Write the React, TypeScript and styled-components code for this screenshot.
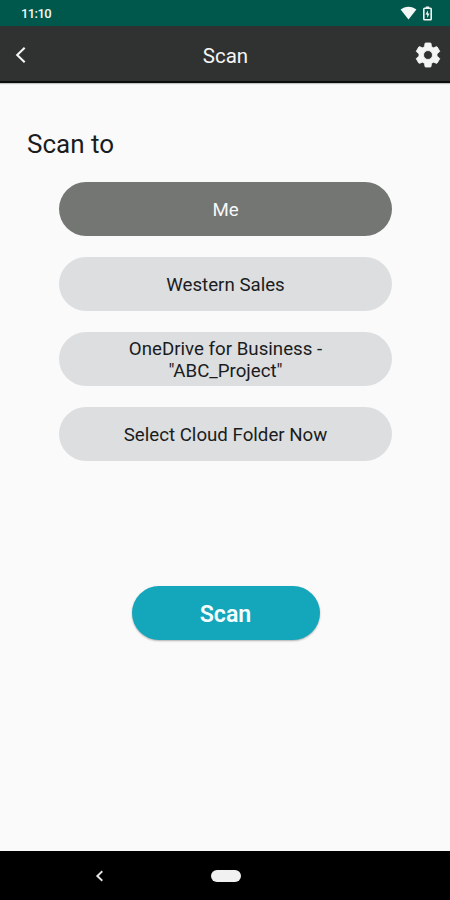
import React from 'react';
import styled, { createGlobalStyle } from 'styled-components';

const GlobalStyle = createGlobalStyle`
  *, *::before, *::after { box-sizing: border-box; }
  body { margin: 0; background: #fafafa; }
  button { font: inherit; border: 0; margin: 0; padding: 0; background: none; color: inherit; }
  svg { display: block; }
`;

const Screen = styled.div`
  width: 450px;
  height: 900px;
  display: flex;
  flex-direction: column;
  overflow: hidden;
  background: #fafafa;
  color: #1b1c1d;
  font-family: Roboto, 'Liberation Sans', sans-serif;
`;

const StatusBar = styled.div`
  height: 26px;
  flex: none;
  display: flex;
  align-items: center;
  justify-content: space-between;
  padding: 1px 18px 0 21px;
  background: #00574b;
  color: #f2f7f6;
`;

const Clock = styled.span`
  font-size: 13px;
  font-weight: 500;
  line-height: 16px;
  letter-spacing: -0.6px;
`;

const StatusIcons = styled.div`
  display: flex;
  align-items: center;
  gap: 6px;
  padding-bottom: 1px;
`;

const AppBar = styled.header`
  height: 57px;
  flex: none;
  display: grid;
  grid-template-columns: 56px 1fr 56px;
  align-items: center;
  background: #303231;
  color: #f4f5f5;
  border-bottom: 2px solid #0c0d0d;
  box-shadow: 0 1px 1px rgba(0, 0, 0, 0.22);
`;

const Title = styled.h1`
  margin: 0;
  padding: 4px 0 0 1px;
  text-align: center;
  font-size: 20.5px;
  font-weight: 400;
  line-height: 24px;
`;

const IconButton = styled.button<{ $side: 'left' | 'right' }>`
  display: flex;
  justify-content: ${({ $side }) => ($side === 'left' ? 'flex-start' : 'flex-end')};
  padding: ${({ $side }) => ($side === 'left' ? '2px 0 0 14px' : '2px 7px 0 0')};
`;

const Content = styled.main`
  flex: 1;
  display: flex;
  flex-direction: column;
  align-items: center;
  padding-top: 46px;
`;

const Heading = styled.h2`
  align-self: flex-start;
  margin: 0 0 23px 27px;
  font-size: 26px;
  font-weight: 400;
  line-height: 30px;
`;

const Destinations = styled.div`
  display: flex;
  flex-direction: column;
  gap: 21px;
  width: 333px;
  margin-left: 1px;
`;

const Destination = styled.button<{ $selected?: boolean }>`
  height: 54px;
  padding: 2px 55px 0;
  border-radius: 27px;
  background: ${({ $selected }) => ($selected ? '#737673' : '#dcdee0')};
  color: ${({ $selected }) => ($selected ? '#f7f8f8' : '#1b1c1d')};
  font-size: 18.7px;
  line-height: 22px;
  text-align: center;
`;

const ScanButton = styled.button`
  width: 188px;
  height: 54px;
  margin: 125px 0 0 1px;
  padding-top: 2px;
  border-radius: 27px;
  background: #14a6bb;
  color: #f5feff;
  font-size: 23.2px;
  font-weight: 600;
  line-height: 28px;
  box-shadow: 0 1px 2px rgba(0, 0, 0, 0.3);
`;

const NavBar = styled.nav`
  height: 49px;
  flex: none;
  display: grid;
  grid-template-columns: 1fr 30px 1fr;
  align-items: center;
  padding-left: 1px;
  background: #000;
`;

const NavBack = styled.button`
  display: flex;
  padding-left: 94px;
`;

const HomePill = styled.button`
  width: 30px;
  height: 12px;
  border-radius: 6px;
  background: #f1f1f1;
`;

const destinations = ['Me', 'Western Sales', 'OneDrive for Business - "ABC_Project"', 'Select Cloud Folder Now'];

const WifiIcon = () => (
  <svg width="17" height="14" viewBox="0 0 17 14" fill="currentColor">
    <path d="M8.5 13.4 0.6 3.6C2.7 1.8 5.5.7 8.5.7s5.800 1.100 7.900 2.900Z" />
  </svg>
);

const BatteryIcon = () => (
  <svg width="9" height="15" viewBox="0 0 9 15" fill="none">
    <path d="M2.800 .5h3.400V2H2.800z" fill="currentColor" />
    <rect x=".8" y="2.300" width="7.400" height="11.400" rx=".8" stroke="currentColor" strokeWidth="1.600" />
    <path d="M4.900 4.300 2.500 8.600h1.700v3.300l2.400-4.500H4.900Z" fill="currentColor" />
  </svg>
);

const BackIcon = () => (
  <svg width="13" height="18" viewBox="0 0 13 18" fill="none" stroke="currentColor" strokeWidth="2.100">
    <path d="M10.700 1.700 3.200 9l7.500 7.300" />
  </svg>
);

const GearIcon = () => (
  <svg width="30" height="30" viewBox="0 0 24 24" fill="currentColor">
    <path
      stroke="currentColor"
      strokeWidth=".7"
      d="M19.14 12.94c.04-.3.06-.61.06-.94s-.02-.64-.07-.94l2.03-1.58a.49.49 0 0 0 .12-.61l-1.920-3.320a.488.488 0 0 0-.59-.22l-2.390.96c-.5-.38-1.030-.7-1.620-.94l-.36-2.540a.484.484 0 0 0-.48-.41h-3.840c-.24 0-.43.17-.47.41l-.36 2.540c-.59.24-1.130.57-1.620.94l-2.390-.96c-.22-.08-.47 0-.59.22L2.740 8.870c-.12.21-.08.47.12.61l2.030 1.580c-.05.3-.09.63-.09.94s.02.64.07.94l-2.030 1.580a.49.49 0 0 0-.12.61l1.920 3.320c.12.22.37.29.59.22l2.390-.96c.5.38 1.030.7 1.620.94l.36 2.540c.05.24.24.41.48.41h3.840c.24 0 .44-.17.47-.41l.36-2.540c.59-.24 1.130-.56 1.620-.94l2.390.96c.22.08.47 0 .59-.22l1.920-3.320c.12-.22.07-.47-.12-.61l-2.010-1.580zM12 15.600A3.610 3.610 0 0 1 8.400 12c0-1.980 1.620-3.600 3.600-3.600s3.600 1.620 3.600 3.600-1.620 3.600-3.600 3.600z"
    />
  </svg>
);

const NavBackIcon = () => (
  <svg width="9" height="12" viewBox="0 0 9 12" fill="none" stroke="#e3e3e3" strokeWidth="1.900">
    <path d="M7.300 1.200 2.300 6l5 4.800" />
  </svg>
);

export default function App() {
  return (
    <>
      <GlobalStyle />
      <Screen>
        <StatusBar>
          <Clock>11:10</Clock>
          <StatusIcons>
            <WifiIcon />
            <BatteryIcon />
          </StatusIcons>
        </StatusBar>
        <AppBar>
          <IconButton $side="left" aria-label="Back">
            <BackIcon />
          </IconButton>
          <Title>Scan</Title>
          <IconButton $side="right" aria-label="Settings">
            <GearIcon />
          </IconButton>
        </AppBar>
        <Content>
          <Heading>Scan to</Heading>
          <Destinations>
            {destinations.map((name, index) => (
              <Destination key={name} $selected={index === 0}>
                {name}
              </Destination>
            ))}
          </Destinations>
          <ScanButton>Scan</ScanButton>
        </Content>
        <NavBar>
          <NavBack aria-label="Navigate back">
            <NavBackIcon />
          </NavBack>
          <HomePill aria-label="Home" />
        </NavBar>
      </Screen>
    </>
  );
}
